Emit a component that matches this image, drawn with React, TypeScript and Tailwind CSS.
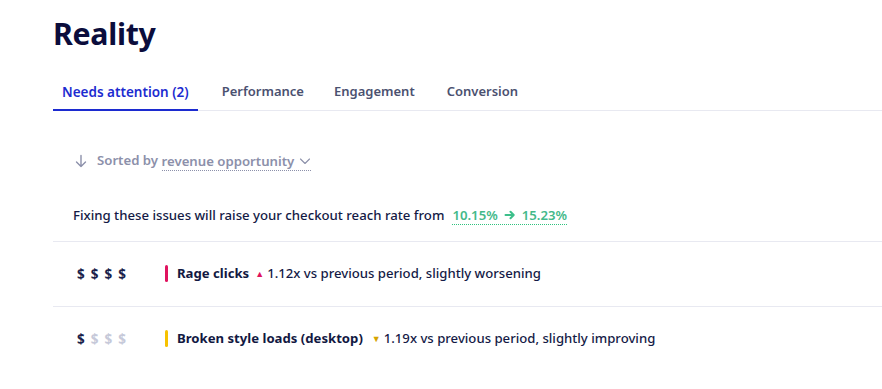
import React from "react";

const font = { fontFamily: '"Noto Sans", "Open Sans", sans-serif' };

function Dollars({ filled }: { filled: number }) {
  return (
    <div className="flex w-[88px] gap-[6px] text-[13.5px] font-bold">
      {[0, 1, 2, 3].map((i) => (
        <span key={i} className={i < filled ? "text-[#1b1f4b]" : "text-[#c6c9d9]"}>
          $
        </span>
      ))}
    </div>
  );
}

export default function App() {
  return (
    <div className="min-h-[389px] bg-white pl-[53px] text-[#141a46]" style={font}>
      <h1 className="pt-[13px] text-[30.3px] font-bold leading-[42px] tracking-[-0.3px] text-[#0b0d3c]">
        Reality
      </h1>
      <div className="mt-[27px] flex border-b border-[#e8e9f1] text-[13px] font-semibold">
        <div className="-mb-px border-b-2 border-[#1c2bd0] px-[9px] pb-[7px] text-[13.5px] text-[#1c2bd0]">Needs attention (2)</div>
        <div className="ml-[15px] px-[9px] pb-[7px] text-[#4b5170]">Performance</div>
        <div className="ml-[12px] px-[9px] pb-[7px] text-[#4b5170]">Engagement</div>
        <div className="ml-[14px] px-[9px] pb-[7px] text-[#4b5170]">Conversion</div>
      </div>
      <div className="pl-[20px]">
        <div className="mt-[40px] flex items-center text-[13.2px] font-semibold text-[#8c90aa]">
          <svg width="14" height="14" viewBox="0 0 14 14" className="ml-[1px] mr-[9px]" fill="none" stroke="#8c90aa" strokeWidth="1.4" strokeLinecap="round" strokeLinejoin="round">
            <path d="M7 1.5v11M2.5 8l4.5 4.5L11.5 8" />
          </svg>
          <span>Sorted by&nbsp;</span>
          <span className="flex items-center border-b border-dotted border-[#8c90aa] leading-[18px]">
            revenue opportunity
            <svg width="12" height="12" viewBox="0 0 12 12" className="ml-[5px]" fill="none" stroke="#8c90aa" strokeWidth="1.1" strokeLinecap="round" strokeLinejoin="round">
              <path d="M1.5 4l4.5 4.5L10.5 4" />
            </svg>
          </span>
        </div>
        <div className="mt-[35px] flex items-center text-[13.2px] font-medium text-[#141a46]">
          <span>Fixing these issues will raise your checkout reach rate from</span>
          <span className="ml-[8px] flex items-center border-b border-dotted border-[#2ec27e] font-semibold leading-[17px] text-[#44b98a]">
            10.15%
            <svg width="12" height="12" viewBox="0 0 12 12" className="mx-[6px]" fill="none" stroke="#3cbf8a" strokeWidth="2" strokeLinecap="round" strokeLinejoin="round">
              <path d="M1.5 6h8M6.5 2.8L9.7 6 6.5 9.2" />
            </svg>
            15.23%
          </span>
        </div>
      </div>
      <div className="mt-[15px] border-t border-[#e8e9f1]">
        <div className="flex h-[64px] items-center pl-[24px] text-[13.15px]">
          <Dollars filled={4} />
          <span className="h-[17px] w-[3px] rounded-full bg-[#e0135f]" />
          <span className="ml-[9px] font-bold text-[#121842]">Rage clicks</span>
          <span className="ml-[6px] mr-[3px] text-[9px] text-[#e0135f]">▲</span>
          <span className="font-medium text-[#141a46]">1.12x vs previous period, slightly worsening</span>
        </div>
      </div>
      <div className="border-t border-[#e8e9f1]">
        <div className="flex h-[64px] items-center pl-[24px] text-[13.15px]">
          <Dollars filled={1} />
          <span className="h-[17px] w-[3px] rounded-full bg-[#f7c200]" />
          <span className="ml-[9px] font-bold text-[#121842]">Broken style loads (desktop)</span>
          <span className="ml-[9px] mr-[3px] text-[9px] text-[#d6a400]">▼</span>
          <span className="font-medium text-[#141a46]">1.19x vs previous period, slightly improving</span>
        </div>
      </div>
    </div>
  );
}
